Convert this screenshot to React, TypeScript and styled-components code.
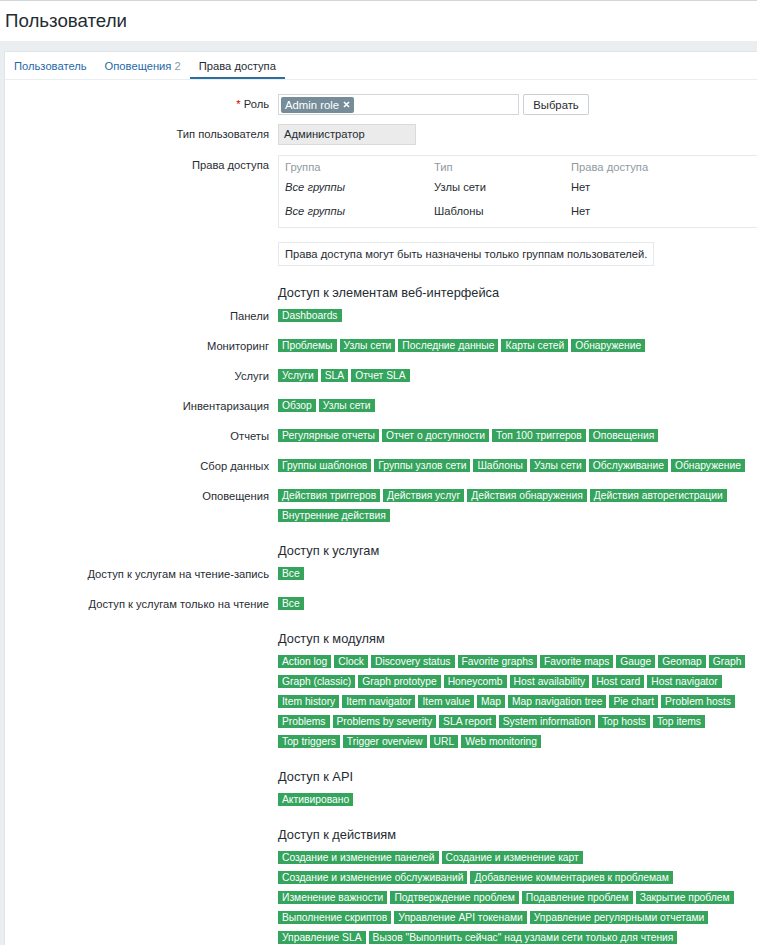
import React from 'react';
import styled, { createGlobalStyle } from 'styled-components';

const GlobalStyle = createGlobalStyle`
  html, body {
    margin: 0;
    padding: 0;
    background: #ebeef0;
    overflow-x: hidden;
  }

  body {
    font-family: "Liberation Sans", Arial, sans-serif;
    font-size: 11.2px;
    color: #1f2c33;
  }
`;

const WEB_ROWS: { label: string; items: string[] }[] = [
  { label: 'Панели', items: ['Dashboards'] },
  { label: 'Мониторинг', items: ['Проблемы', 'Узлы сети', 'Последние данные', 'Карты сетей', 'Обнаружение'] },
  { label: 'Услуги', items: ['Услуги', 'SLA', 'Отчет SLA'] },
  { label: 'Инвентаризация', items: ['Обзор', 'Узлы сети'] },
  { label: 'Отчеты', items: ['Регулярные отчеты', 'Отчет о доступности', 'Топ 100 триггеров', 'Оповещения'] },
  {
    label: 'Сбор данных',
    items: ['Группы шаблонов', 'Группы узлов сети', 'Шаблоны', 'Узлы сети', 'Обслуживание', 'Обнаружение'],
  },
  {
    label: 'Оповещения',
    items: [
      'Действия триггеров',
      'Действия услуг',
      'Действия обнаружения',
      'Действия авторегистрации',
      'Внутренние действия',
    ],
  },
];

const MODULES = [
  'Action log', 'Clock', 'Discovery status', 'Favorite graphs', 'Favorite maps', 'Gauge', 'Geomap', 'Graph',
  'Graph (classic)', 'Graph prototype', 'Honeycomb', 'Host availability', 'Host card', 'Host navigator',
  'Item history', 'Item navigator', 'Item value', 'Map', 'Map navigation tree', 'Pie chart', 'Problem hosts',
  'Problems', 'Problems by severity', 'SLA report', 'System information', 'Top hosts', 'Top items',
  'Top triggers', 'Trigger overview', 'URL', 'Web monitoring',
];

const ACTIONS = [
  'Создание и изменение панелей',
  'Создание и изменение карт',
  'Создание и изменение обслуживаний',
  'Добавление комментариев к проблемам',
  'Изменение важности',
  'Подтверждение проблем',
  'Подавление проблем',
  'Закрытие проблем',
  'Выполнение скриптов',
  'Управление API токенами',
  'Управление регулярными отчетами',
  'Управление SLA',
  'Вызов "Выполнить сейчас" над узлами сети только для чтения',
];

const PERMISSIONS = [
  { group: 'Все группы', type: 'Узлы сети', access: 'Нет' },
  { group: 'Все группы', type: 'Шаблоны', access: 'Нет' },
];

const TagGroup = ({ items }: { items: string[] }) => (
  <TagList>
    {items.map((item, i) => (
      <Tag key={i}>{item}</Tag>
    ))}
  </TagList>
);

const App = () => {
  return (
    <>
      <GlobalStyle />
      <Header>
        <Title>Пользователи</Title>
      </Header>
      <Main>
        <Card>
          <Tabs>
            <Tab>Пользователь</Tab>
            <Tab>
              Оповещения <TabCount>2</TabCount>
            </Tab>
            <Tab $active>Права доступа</Tab>
          </Tabs>

          <Form>
            <FormRow $mb={9}>
              <Label>
                <Required>*</Required> Роль
              </Label>
              <Field>
                <MultiSelect>
                  <Chip>
                    Admin role
                    <svg width="7" height="7" viewBox="0 0 7 7">
                      <path d="M1 1L6 6M6 1L1 6" stroke="#fff" strokeWidth="1.6" />
                    </svg>
                  </Chip>
                </MultiSelect>
                <Button>Выбрать</Button>
              </Field>
            </FormRow>

            <FormRow>
              <Label>Тип пользователя</Label>
              <Field>
                <ReadOnly>Администратор</ReadOnly>
              </Field>
            </FormRow>

            <FormRow $mb={14}>
              <Label>Права доступа</Label>
              <PermTable>
                <PermHead>
                  <span>Группа</span>
                  <span>Тип</span>
                  <span>Права доступа</span>
                </PermHead>
                {PERMISSIONS.map((p, i) => (
                  <PermRow key={i}>
                    <em>{p.group}</em>
                    <span>{p.type}</span>
                    <span>{p.access}</span>
                  </PermRow>
                ))}
              </PermTable>
            </FormRow>

            <FormRow $mb={12}>
              <span />
              <div>
                <InfoBox>Права доступа могут быть назначены только группам пользователей.</InfoBox>
              </div>
            </FormRow>

            <FormRow $mb={0}>
              <span />
              <SectionTitle>Доступ к элементам веб-интерфейса</SectionTitle>
            </FormRow>
            {WEB_ROWS.map(row => (
              <FormRow key={row.label}>
                <Label>{row.label}</Label>
                <TagGroup items={row.items} />
              </FormRow>
            ))}

            <FormRow $mb={0}>
              <span />
              <SectionTitle>Доступ к услугам</SectionTitle>
            </FormRow>
            <FormRow>
              <Label>Доступ к услугам на чтение-запись</Label>
              <TagGroup items={['Все']} />
            </FormRow>
            <FormRow>
              <Label>Доступ к услугам только на чтение</Label>
              <TagGroup items={['Все']} />
            </FormRow>

            <FormRow $mb={0}>
              <span />
              <SectionTitle>Доступ к модулям</SectionTitle>
            </FormRow>
            <FormRow>
              <span />
              <TagGroup items={MODULES} />
            </FormRow>

            <FormRow $mb={0}>
              <span />
              <SectionTitle>Доступ к API</SectionTitle>
            </FormRow>
            <FormRow>
              <span />
              <TagGroup items={['Активировано']} />
            </FormRow>

            <FormRow $mb={0}>
              <span />
              <SectionTitle>Доступ к действиям</SectionTitle>
            </FormRow>
            <FormRow>
              <span />
              <TagGroup items={ACTIONS} />
            </FormRow>
          </Form>
        </Card>
      </Main>
    </>
  );
};

const Header = styled.header`
  box-sizing: border-box;
  height: 41px;
  background: #fff;
  border-top: 1px solid #d3d6d8;
  padding-left: 5px;
  display: flex;
  align-items: center;
`;

const Title = styled.h1`
  margin: 0;
  font-size: 18.7px;
  font-weight: normal;
  line-height: 24px;
  color: #1f2c33;
`;

const Main = styled.main`
  padding: 10px 0 0 4px;
`;

const Card = styled.div`
  box-sizing: border-box;
  margin-right: -20px;
  min-height: calc(100vh - 51px);
  background: #fff;
  border: 1px solid #dfe4e7;
  border-right: none;
`;

const Tabs = styled.nav`
  box-sizing: border-box;
  display: flex;
  height: 28px;
  border-bottom: 1px solid #ebeef0;
`;

const Tab = styled.div<{ $active?: boolean }>`
  display: flex;
  align-items: center;
  height: 27px;
  padding: 0 9px;
  color: ${({ $active }) => ($active ? '#1f2c33' : '#1f6aa8')};
  box-shadow: ${({ $active }) => ($active ? 'inset 0 -2px 0 #2a6f9e' : 'none')};
  white-space: pre;
`;

const TabCount = styled.span`
  color: #8a9aa4;
`;

const Form = styled.div`
  padding-top: 14px;
`;

const FormRow = styled.div<{ $mb?: number }>`
  display: grid;
  grid-template-columns: 264px 1fr;
  column-gap: 9px;
  align-items: start;
  margin-bottom: ${({ $mb }) => ($mb ?? 10)}px;
`;

const Label = styled.div`
  text-align: right;
  line-height: 20px;
  white-space: nowrap;
`;

const Required = styled.span`
  color: #d40000;
`;

const Field = styled.div`
  display: flex;
  align-items: center;
  gap: 4px;
`;

const MultiSelect = styled.div`
  box-sizing: border-box;
  display: flex;
  align-items: center;
  width: 241px;
  height: 21px;
  padding: 0 2px;
  border: 1px solid #d3d7da;
  background: #fff;
`;

const Chip = styled.span`
  display: inline-flex;
  align-items: center;
  gap: 4px;
  height: 16px;
  padding: 0 4px;
  border-radius: 2px;
  background: #768d99;
  color: #fff;
  font-size: 11.3px;
`;

const Button = styled.button`
  box-sizing: border-box;
  width: 66px;
  height: 21px;
  padding: 0;
  border: 1px solid #c9cfd3;
  border-radius: 2px;
  background: #fff;
  color: #1f2c33;
  font-family: inherit;
  font-size: 11.3px;
`;

const ReadOnly = styled.div`
  box-sizing: border-box;
  width: 138px;
  height: 21px;
  padding: 0 5px;
  line-height: 19px;
  background: #ebebeb;
  border: 1px solid #dadada;
`;

const PermTable = styled.div`
  box-sizing: border-box;
  width: 100%;
  padding: 3px 6px 4px;
  border: 1px solid #e6e9eb;
`;

const PermHead = styled.div`
  display: grid;
  grid-template-columns: 149px 137px 1fr;
  line-height: 16px;
  color: #8f9aa1;
`;

const PermRow = styled.div`
  display: grid;
  grid-template-columns: 149px 137px 1fr;
  line-height: 24px;

  em {
    font-style: italic;
  }
`;

const InfoBox = styled.div`
  display: inline-block;
  padding: 0 6px;
  line-height: 22px;
  border: 1px solid #e6e9eb;
`;

const SectionTitle = styled.h4`
  margin: 5px 0 3px;
  font-size: 12.8px;
  font-weight: normal;
  line-height: 20px;
  color: #1f2c33;
`;

const TagList = styled.div`
  display: flex;
  flex-wrap: wrap;
  gap: 7px 3px;
  max-width: 476px;
  padding: 3px 0 4px;
`;

const Tag = styled.span`
  height: 13px;
  padding: 0 4px;
  line-height: 13px;
  font-size: 10.3px;
  white-space: nowrap;
  background: #35a45c;
  color: #fff;
`;

export default App;
